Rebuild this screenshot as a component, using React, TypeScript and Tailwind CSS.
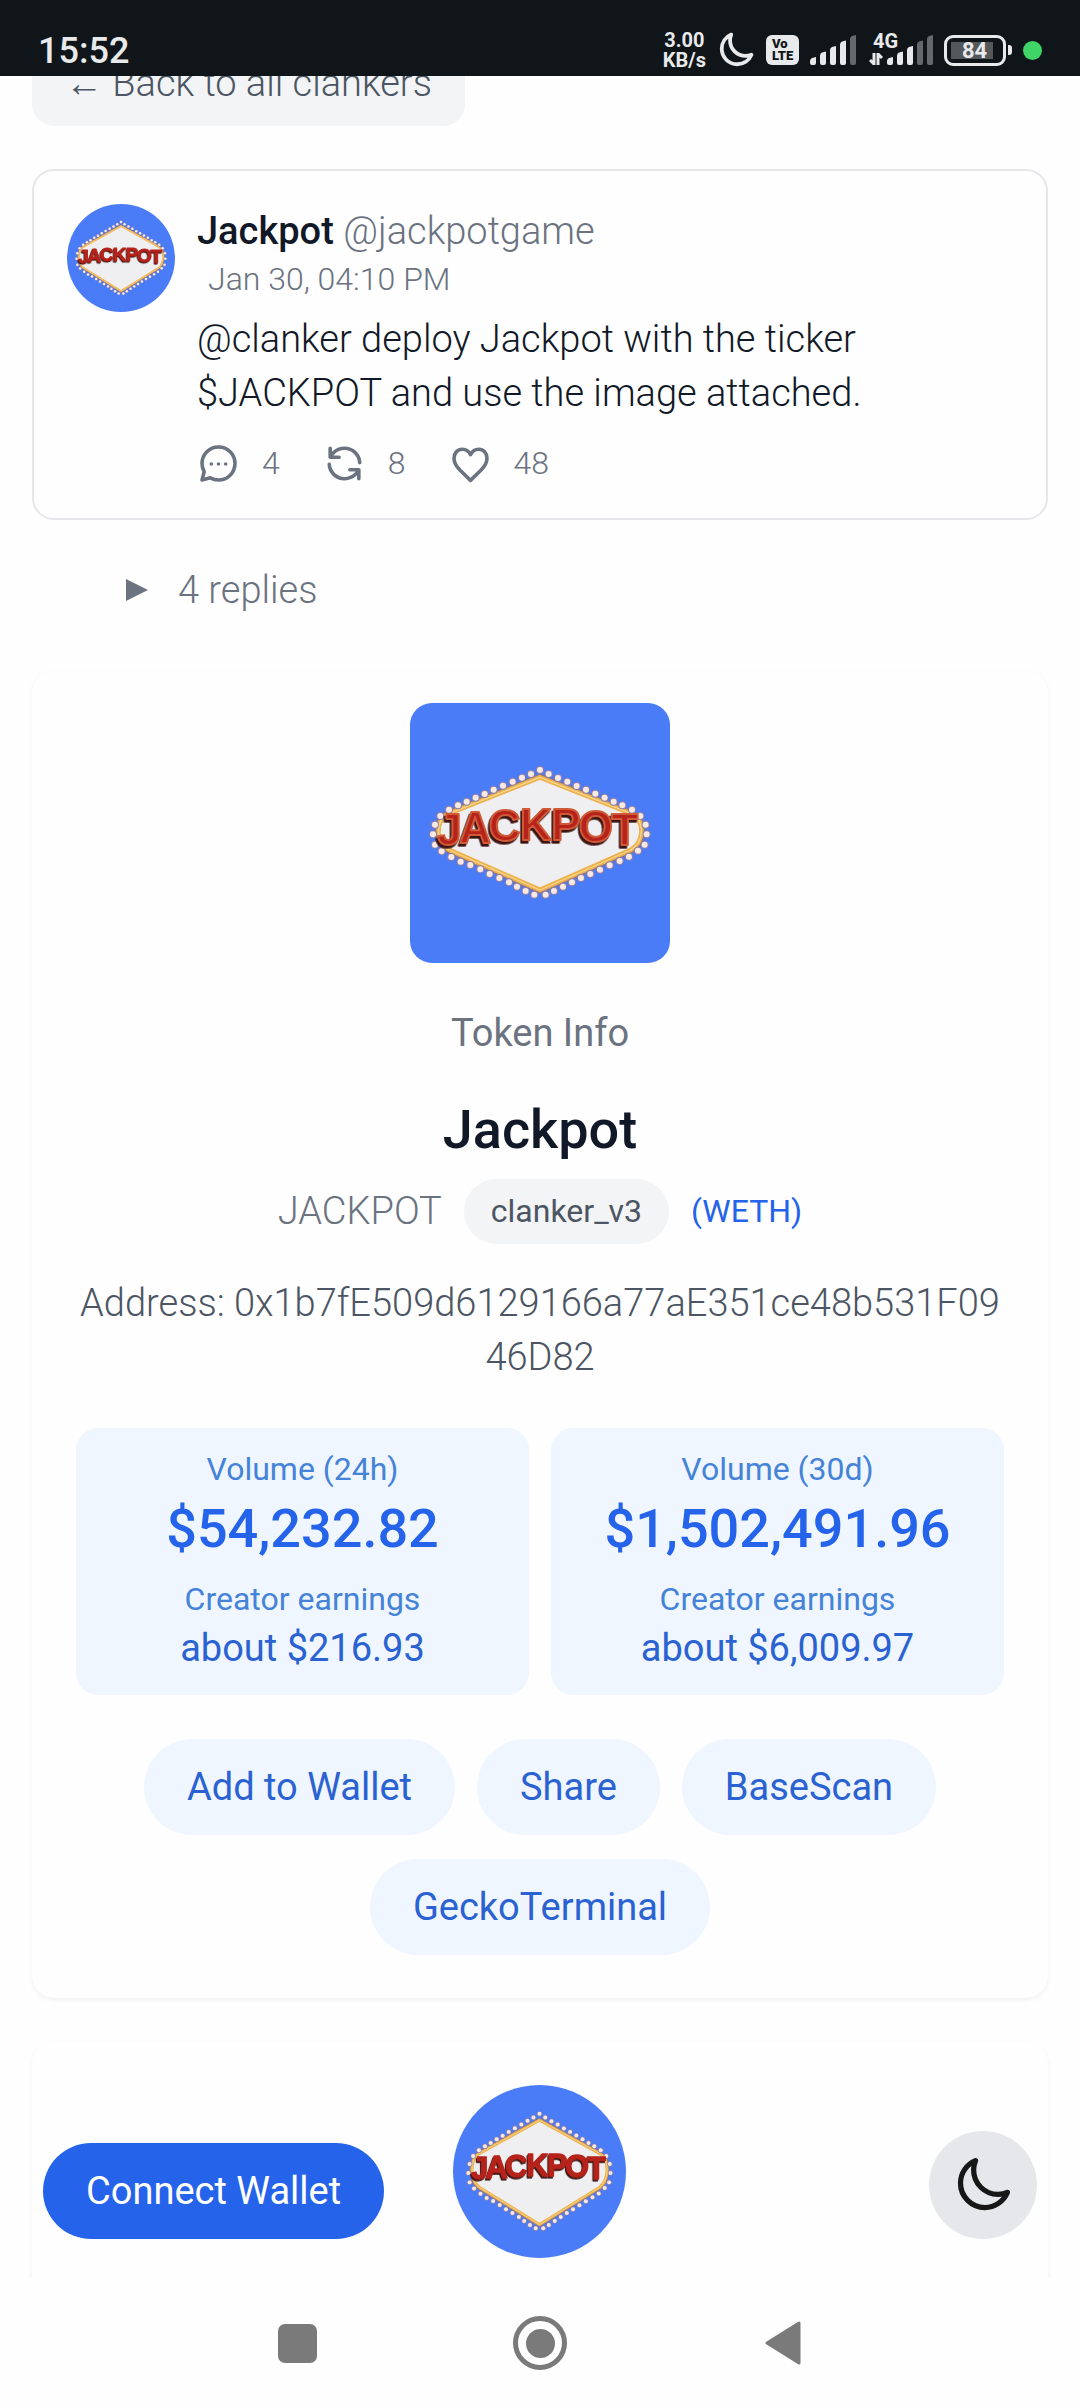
import React from "react";

const stats = [
  { label: "Volume (24h)", volume: "$54,232.82", earnings: "about $216.93" },
  { label: "Volume (30d)", volume: "$1,502,491.96", earnings: "about $6,009.97" },
];

const links = ["Add to Wallet", "Share", "BaseScan", "GeckoTerminal"];

const bulbs = [
  [360, 60], [333, 72], [306, 83], [278, 95], [249, 107], [221, 119], [194, 132],
  [167, 143], [140, 155], [114, 166], [87, 179], [61, 198], [45, 224], [39, 253],
  [45, 284], [65, 304], [94, 321], [122, 335], [151, 345], [181, 358], [209, 372],
  [238, 384], [267, 397], [291, 410], [317, 423], [343, 434], [386, 72], [414, 84],
  [442, 95], [470, 108], [498, 119], [526, 131], [554, 143], [581, 155], [607, 166],
  [636, 179], [661, 198], [677, 224], [680, 253], [674, 284], [654, 302], [627, 320],
  [599, 333], [569, 346], [540, 359], [511, 372], [483, 384], [456, 397], [429, 410],
  [402, 423], [377, 434],
];

const signPath =
  "M360 82 L632 190 Q668 206 664 250 Q660 284 632 300 L360 420 L88 300 Q60 284 56 250 Q52 206 88 190 Z";
const tallSignPath =
  "M360 18 L632 168 Q668 190 664 251 Q660 298 632 320 L360 488 L88 320 Q60 298 56 251 Q52 190 88 168 Z";

// the round avatars use a taller sign than the square token image
function JackpotLogo({ className, tall }: { className: string; tall?: boolean }) {
  const path = tall ? tallSignPath : signPath;
  return (
    <svg viewBox="0 0 260 260" className={className} role="img">
      <rect width="260" height="260" fill="#4a7cf8" />
      <g transform="translate(10 47) scale(0.3333)">
        <path d={path} fill="none" stroke="#8a7590" strokeWidth="22" />
        <path d={path} fill="#efeff1" stroke="#eeb04a" strokeWidth="14" />
        <path d={path} fill="none" stroke="#f9d68c" strokeWidth="4" />
        {bulbs.map(([x, y]) => {
          const cy = tall ? 247 + (y - 247) * 1.38 : y;
          return (
            <g key={`${x}-${y}`}>
              <circle cx={x} cy={cy} r="12" fill="#8f7fa8" />
              <circle cx={x} cy={cy} r="9" fill="#f8e9e2" />
            </g>
          );
        })}
        <text
          x="52 118 206 300 394 476 574"
          y="284 279 274 270 270 275 284"
          fontSize={tall ? 138 : 132}
          fill="#b5231a"
          stroke={tall ? "#b5231a" : "#cf5a38"}
          strokeWidth="6"
          strokeLinejoin="round"
          className="font-['Liberation_Sans',sans-serif] font-bold drop-shadow-[-5px_8px_0_#3c1512]"
        >
          JACKPOT
        </text>
      </g>
    </svg>
  );
}

function MoonIcon({ className, stroke }: { className: string; stroke: number }) {
  return (
    <svg
      viewBox="0 0 24 24"
      fill="none"
      stroke="currentColor"
      strokeWidth={stroke}
      strokeLinecap="round"
      strokeLinejoin="round"
      className={className}
    >
      <path d="M21.752 15.002A9.72 9.72 0 0 1 18 15.75c-5.385 0-9.75-4.365-9.75-9.75 0-1.33.266-2.597.748-3.752A9.753 9.753 0 0 0 3 11.25C3 16.635 7.365 21 12.75 21a9.753 9.753 0 0 0 9.002-5.998Z" />
    </svg>
  );
}

function SignalBars({ active }: { active: number }) {
  return (
    <svg viewBox="0 0 46 30" className="h-[30px] w-[46px]">
      {[0, 1, 2, 3, 4].map((i) => {
        const x = i * 10;
        const top = 22 - i * 5.5;
        return (
          <path
            key={i}
            d={`M${x} ${top + 4} Q${x} ${top + 2} ${x + 2} ${top + 1} L${x + 6} ${top} V28 Q${x + 6} 30 ${x + 4} 30 H${x + 2} Q${x} 30 ${x} 28 Z`}
            fill={i < active ? "#e8e9ea" : "#66696b"}
          />
        );
      })}
    </svg>
  );
}

function StatusBar() {
  return (
    <header className="relative z-10 flex h-[76px] items-end justify-between bg-[#0f1518] px-[38px] text-[#e8e9ea]">
      <time className="pb-[4px] text-[36px] leading-[42px] font-medium">15:52</time>
      <div className="flex items-center gap-[11px] pb-[6px]">
        <div className="text-center text-[20px] leading-[20px] font-bold">
          <div>3.00</div>
          <div>KB/s</div>
        </div>
        <MoonIcon className="size-[38px]" stroke={2.4} />
        <div className="h-[30px] w-[33px] rounded-[6px] bg-[#e8e9ea] pt-[3px] pl-[6px] text-[13px] leading-[12px] font-black text-[#0f1518]">
          <div>Vo</div>
          <div>LTE</div>
        </div>
        <SignalBars active={4} />
        <div className="relative ml-[20px]">
          <SignalBars active={3} />
          <span className="absolute -top-[4px] -left-[14px] text-[20px] leading-[20px] font-bold">
            4G
          </span>
          <svg
            viewBox="0 0 14 12"
            fill="none"
            stroke="currentColor"
            strokeWidth="3"
            className="absolute bottom-0 -left-[18px] h-[12px] w-[14px]"
          >
            <path d="M5 0V11L1 7M9 12V1L13 5" />
          </svg>
        </div>
        <div className="flex items-center gap-[2px]">
          <div className="flex h-[31px] w-[62px] rounded-[9px] border-3 border-[#e8e9ea] p-[4px]">
            <div className="flex w-[42px] items-center justify-center bg-[#54585a] pl-[5px] text-[22px] leading-[17px] font-bold">
              84
            </div>
          </div>
          <div className="h-[10px] w-[4px] rounded-r-[3px] bg-[#e8e9ea]" />
        </div>
        <div className="size-[19px] rounded-full bg-[#3fd567]" />
      </div>
    </header>
  );
}

function Reaction({ count, children }: { count: number; children: React.ReactNode }) {
  return (
    <span className="flex items-center gap-[22px]">
      <svg
        viewBox="0 0 24 24"
        fill="none"
        stroke="currentColor"
        strokeWidth="2"
        strokeLinecap="round"
        strokeLinejoin="round"
        className="size-[43px]"
      >
        {children}
      </svg>
      {count}
    </span>
  );
}

function Cast() {
  return (
    <article className="flex gap-[22px] rounded-[22px] border-2 border-[#e5e7eb] p-[33px]">
      <JackpotLogo tall className="size-[108px] shrink-0 rounded-full" />
      <div className="min-w-0 flex-1">
        <div className="text-[38px] leading-[54px]">
          <span className="font-medium text-[#111827]">Jackpot</span>{" "}
          <span className="font-light text-[#6b7280]">@jackpotgame</span>
        </div>
        <time className="block pl-[11px] text-[32px] leading-[43px] font-light text-[#6b7280]">
          Jan 30, 04:10 PM
        </time>
        <p className="mt-[11px] max-w-[720px] text-[38px] leading-[54px] font-light text-[#111827]">
          @clanker deploy Jackpot with the ticker $JACKPOT and use the image attached.
        </p>
        <div className="mt-[22px] flex gap-[43px] text-[32px] leading-[43px] font-light text-[#6b7280]">
          <Reaction count={4}>
            <path d="M12 21.2a9.2 9.2 0 1 0-9.2-9.2c0 1.7.4 3.2 1.2 4.6L2.8 21.2l4.6-1.2c1.400.8 2.900 1.200 4.600 1.200z" />
            <path d="M8 12.3h.01M12 12.3h.01M16 12.3h.01" />
          </Reaction>
          <Reaction count={8}>
            <path d="M20.5 11.5a8.5 8.5 0 0 0-8.5-8 9 9 0 0 0-6.3 2.6L4 8.200M4 3.500V8.500h5" />
            <path d="M3.5 12.5a8.5 8.5 0 0 0 8.5 8 9 9 0 0 0 6.3-2.6L20 15.800M20 20.500V15.500h-5" />
          </Reaction>
          <Reaction count={48}>
            <path d="M21.2 9c0 3-1.6 4.9-3.4 6.8L12 21.4l-5.8-5.6C4.4 13.9 2.8 12 2.8 9 2.8 6.1 4.8 4 7.4 4c2 0 3.6 1.1 4.6 3 1-1.9 2.6-3 4.6-3 2.6 0 4.6 2.1 4.6 5z" />
          </Reaction>
        </div>
      </div>
    </article>
  );
}

function TokenInfo() {
  return (
    <section className="flex flex-col items-center rounded-[22px] px-[44px] pt-[32px] pb-[43px] text-center shadow-[0_2px_5px_rgba(0,0,0,0.06)]">
      <JackpotLogo className="size-[260px] rounded-[22px]" />
      <p className="mt-[43px] text-[38px] leading-[54px] text-[#6b7280]">Token Info</p>
      <h1 className="mt-[32px] text-[54px] leading-[76px] font-medium text-[#111827]">
        Jackpot
      </h1>
      <div className="mt-[11px] flex items-center gap-[22px] leading-[43px]">
        <span className="text-[38px] font-light text-[#6b7280]">JACKPOT</span>
        <span className="rounded-full bg-[#f3f4f6] px-[27px] py-[11px] text-[32px] text-[#4b5563]">
          clanker_v3
        </span>
        <a href="#weth" className="text-[32px] text-[#2563eb]">
          (WETH)
        </a>
      </div>
      <p className="mt-[32px] w-full text-[38px] leading-[54px] font-light break-all text-[#4b5563]">
        Address: 0x1b7fE509d6129166a77aE351ce48b531F0946D82
      </p>
      <div className="mt-[44px] grid w-full grid-cols-2 gap-[22px]">
        {stats.map((stat) => (
          <div
            key={stat.label}
            className="rounded-[22px] bg-[#eff6ff] py-[20px] text-[32px] leading-[43px] text-[#4583d9]"
          >
            <p>{stat.label}</p>
            <p className="text-[54px] leading-[76px] font-medium text-[#2563eb]">
              {stat.volume}
            </p>
            <p className="mt-[11px]">Creator earnings</p>
            <p className="text-[38px] leading-[54px] text-[#2b62d2]">{stat.earnings}</p>
          </div>
        ))}
      </div>
      <div className="mt-[44px] flex flex-wrap justify-center gap-x-[22px] gap-y-[24px]">
        {links.map((link) => (
          <button
            key={link}
            className="rounded-full bg-[#eff6ff] px-[43px] py-[21px] text-[38px] leading-[54px] text-[#2b62d2]"
          >
            {link}
          </button>
        ))}
      </div>
    </section>
  );
}

function NavigationBar() {
  return (
    <nav className="relative z-10 flex h-[130px] items-center justify-center gap-[189px] bg-[#fefefe] text-[#7a7a7a]">
      <button aria-label="Recent apps" className="flex w-[54px] justify-center">
        <span className="size-[39px] rounded-[7px] bg-current" />
      </button>
      <button
        aria-label="Home"
        className="flex size-[54px] items-center justify-center rounded-full border-5 border-current"
      >
        <span className="size-[29px] rounded-full bg-current" />
      </button>
      <button aria-label="Back" className="flex w-[54px] justify-center">
        <svg viewBox="0 0 36 44" className="h-[44px] w-[36px]">
          <path
            d="M2 22L34 2V42Z"
            fill="currentColor"
            stroke="currentColor"
            strokeWidth="3"
            strokeLinejoin="round"
          />
        </svg>
      </button>
    </nav>
  );
}

function App() {
  return (
    <div className="flex min-h-screen flex-col bg-[#fefefe] font-[Roboto,sans-serif]">
      <StatusBar />
      <main className="relative flex flex-1 flex-col px-[32px]">
        {/* page is scrolled, the back link sits partly under the status bar */}
        <a
          href="#clankers"
          className="-mt-[36px] self-start rounded-[22px] bg-[#f3f4f6] px-[33px] py-[16px] text-[38px] leading-[54px] font-light text-[#4b5563]"
        >
          ← Back to all clankers
        </a>
        <div className="mt-[43px]">
          <Cast />
        </div>
        <button className="mt-[43px] ml-[92px] flex items-center gap-[30px] self-start text-[38px] leading-[54px] font-light text-[#6b7280]">
          <svg viewBox="0 0 24 24" className="size-[24px]">
            <path d="M2 1L24 12L2 23Z" fill="currentColor" />
          </svg>
          4 replies
        </button>
        <div className="mt-[54px]">
          <TokenInfo />
        </div>
        <section className="mt-[43px] flex-1 rounded-t-[22px] shadow-[0_2px_5px_rgba(0,0,0,0.06)]" />

        {/* floating actions */}
        <div className="absolute inset-x-0 bottom-0 grid grid-cols-3 items-end px-[43px] pb-[39px]">
          <button className="justify-self-start rounded-full bg-[#2563eb] px-[43px] py-[21px] text-[38px] leading-[54px] whitespace-nowrap text-white">
            Connect Wallet
          </button>
          <button aria-label="Jackpot" className="-mb-[19px] justify-self-center">
            <JackpotLogo tall className="size-[173px] rounded-full" />
          </button>
          <button
            aria-label="Toggle dark mode"
            className="flex size-[108px] items-center justify-center justify-self-end rounded-full bg-[#e5e7eb] text-[#171717]"
          >
            <MoonIcon className="size-[60px]" stroke={2.1} />
          </button>
        </div>
      </main>
      <NavigationBar />
    </div>
  );
}

export default App;
